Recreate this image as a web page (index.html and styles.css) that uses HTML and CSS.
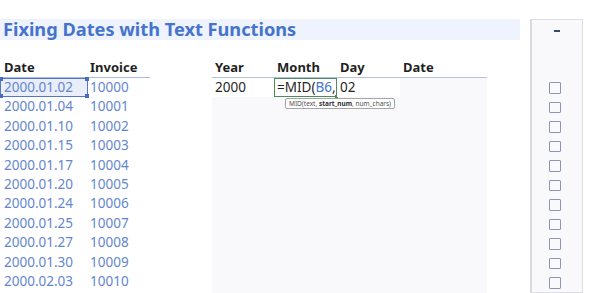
FILE: index.html
```html
<!DOCTYPE html>
<html lang="en">
<head>
    <meta charset="UTF-8">
    <meta name="viewport" content="width=device-width, initial-scale=1.0">
    <title>Fixing Dates with Text Functions</title>
    <link rel="stylesheet" href="styles.css">
</head>
<body>
    <div class="page">
        <main class="sheet">
            <h1 class="title-bar">Fixing Dates with Text Functions</h1>

            <div class="tables">
                <!-- source data -->
                <div class="grid source">
                    <div class="head">Date</div>
                    <div class="head">Invoice</div>
                    <div class="cell selected">2000.01.02<i class="h tl"></i><i class="h tr"></i><i class="h bl"></i><i class="h br"></i></div>
                    <div class="cell">10000</div>
                    <div class="cell">2000.01.04</div>
                    <div class="cell">10001</div>
                    <div class="cell">2000.01.10</div>
                    <div class="cell">10002</div>
                    <div class="cell">2000.01.15</div>
                    <div class="cell">10003</div>
                    <div class="cell">2000.01.17</div>
                    <div class="cell">10004</div>
                    <div class="cell">2000.01.20</div>
                    <div class="cell">10005</div>
                    <div class="cell">2000.01.24</div>
                    <div class="cell">10006</div>
                    <div class="cell">2000.01.25</div>
                    <div class="cell">10007</div>
                    <div class="cell">2000.01.27</div>
                    <div class="cell">10008</div>
                    <div class="cell">2000.01.30</div>
                    <div class="cell">10009</div>
                    <div class="cell">2000.02.03</div>
                    <div class="cell">10010</div>
                </div>

                <!-- helper columns -->
                <div class="calc">
                    <div class="grid calc-head">
                        <div class="head">Year</div>
                        <div class="head">Month</div>
                        <div class="head">Day</div>
                        <div class="head">Date</div>
                    </div>
                    <div class="calc-body">
                        <div class="grid calc-row">
                            <div class="cell plain">2000</div>
                            <div class="cell editing">=MID(<span class="ref">B6</span>,<span class="caret"></span><i class="fill"></i>
                                <div class="tip">MID(text, <b>start_num</b>, num_chars)</div>
                            </div>
                            <div class="cell plain">02</div>
                            <div class="cell plain"></div>
                        </div>
                    </div>
                </div>
            </div>
        </main>

        <aside class="side">
            <div class="dash"></div>
            <div class="checks">
                <span class="box"></span>
                <span class="box"></span>
                <span class="box"></span>
                <span class="box"></span>
                <span class="box"></span>
                <span class="box"></span>
                <span class="box"></span>
                <span class="box"></span>
                <span class="box"></span>
                <span class="box"></span>
                <span class="box"></span>
            </div>
        </aside>
    </div>
</body>
</html>
```

FILE: styles.css
```css
* {
    margin: 0;
    padding: 0;
    box-sizing: border-box;
    font-family: 'Noto Sans', 'Open Sans', sans-serif;
}

html, body {
    height: 100%;
    overflow: hidden;
}

body {
    background: #ffffff;
}

.page {
    display: flex;
    height: 293px;
    padding-top: 19px;
}

.sheet {
    width: 520px;
    display: flex;
    flex-direction: column;
}

.title-bar {
    height: 21px;
    background: #eef3fd;
    color: #4673cc;
    font-size: 18.2px;
    font-weight: 700;
    line-height: 21px;
    padding-left: 3px;
    white-space: nowrap;
}

.tables {
    display: flex;
    gap: 62px;
    margin-top: 18px;
    flex: 1;
}

.grid {
    display: grid;
    grid-auto-rows: 19.4px;
}

.source {
    grid-template-columns: 88px 62px;
    grid-template-rows: 20px;
    align-content: start;
}

.head {
    font-size: 13px;
    font-weight: 700;
    color: #1f1f1f;
    line-height: 19px;
    padding-left: 4px;
    border-bottom: 1px solid #a9bbe0;
}

.cell {
    position: relative;
    font-size: 13.5px;
    color: #6486d0;
    line-height: 19.4px;
    padding-left: 4px;
    white-space: nowrap;
}

.source .head:nth-child(2),
.source .cell:nth-child(even) {
    padding-left: 2px;
}

.selected {
    background: #e9eef9;
    border: 1px solid #5677c4;
    line-height: 17.4px;
    padding-left: 3px;
}

.h {
    position: absolute;
    width: 4px;
    height: 4px;
    background: #4a6cc0;
}

.tl { top: -2px; left: -2px; }
.tr { top: -2px; right: -2px; }
.bl { bottom: -2px; left: -2px; }
.br { bottom: -2px; right: -2px; }

.calc {
    width: 275px;
    display: flex;
    flex-direction: column;
}

.calc-head {
    grid-template-columns: 62px 63px 63px 87px;
    grid-template-rows: 20px;
}

.calc-head .head {
    padding-left: 3px;
    border-bottom-color: #b3c2de;
}

.calc-body {
    flex: 1;
    background: #f9f8fb;
}

.calc-row {
    grid-template-columns: 62px 63px 63px 87px;
}

.plain {
    color: #262626;
    background: #ffffff;
    padding-left: 3px;
}

.calc-row .plain:last-child {
    background: transparent;
}

.editing {
    color: #262626;
    background: #ffffff;
    border: 1px solid #4f8a5f;
    line-height: 17.4px;
    padding-left: 2px;
}

.ref {
    color: #4673cc;
}

.caret {
    display: inline-block;
    width: 1px;
    height: 14px;
    background: #222;
    vertical-align: -2px;
    margin-left: 1px;
}

.fill {
    position: absolute;
    right: -2px;
    bottom: -2px;
    width: 3px;
    height: 3px;
    background: #4f8a5f;
}

.tip {
    position: absolute;
    top: 19px;
    left: 10px;
    height: 11px;
    padding: 0 3px;
    background: #ffffff;
    border: 1px solid #a6a6a6;
    border-radius: 2px;
    font-size: 6.5px;
    line-height: 9px;
    color: #505050;
    white-space: nowrap;
    z-index: 2;
}

.tip b {
    color: #303030;
}

.side {
    width: 53px;
    margin-left: 10px;
    height: 274px;
    background: #f9f8fb;
    border: 1px solid #dedde2;
    border-left: 2px solid #d9d8dd;
    display: flex;
    flex-direction: column;
    align-items: center;
}

.dash {
    width: 6px;
    height: 2px;
    background: #3b4868;
    margin-top: 10px;
    margin-right: 1px;
}

.checks {
    display: flex;
    flex-direction: column;
    gap: 8px;
    margin-top: 50px;
}

.box {
    width: 11.5px;
    height: 11.5px;
    border: 1.5px solid #8c95b5;
    border-radius: 1px;
    margin-right: 4px;
}
```
